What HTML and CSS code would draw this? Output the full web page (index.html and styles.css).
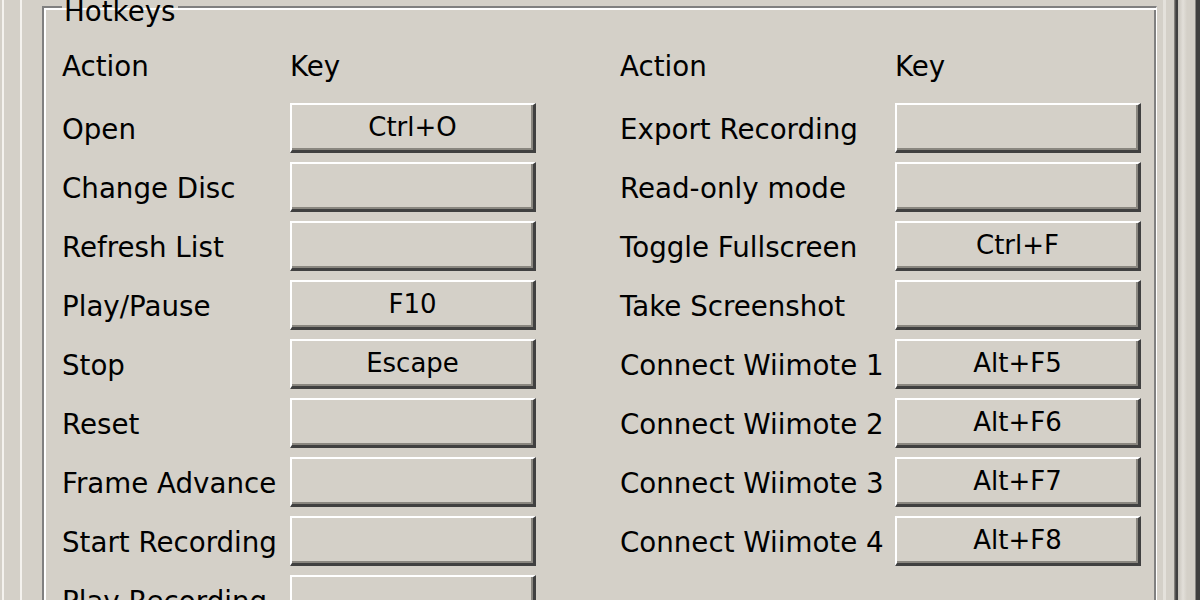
FILE: index.html
```html
<!DOCTYPE html>
<html>
<head>
<meta charset="utf-8">
<link rel="stylesheet" href="styles.css">
</head>
<body>
<div class="win">
  <div class="edge-left"></div>
  <fieldset class="group">
    <legend class="legend"><span class="legend-text">Hotkeys</span></legend>
    <div class="grid">
      <div class="head">Action</div>
      <div class="head key">Key</div>
      <div class="spacer"></div>
      <div class="head">Action</div>
      <div class="head key">Key</div>

      <div class="lbl">Open</div>
      <div class="btn">Ctrl+O</div>
      <div class="spacer"></div>
      <div class="lbl">Export Recording</div>
      <div class="btn"></div>

      <div class="lbl">Change Disc</div>
      <div class="btn"></div>
      <div class="spacer"></div>
      <div class="lbl">Read-only mode</div>
      <div class="btn"></div>

      <div class="lbl">Refresh List</div>
      <div class="btn"></div>
      <div class="spacer"></div>
      <div class="lbl">Toggle Fullscreen</div>
      <div class="btn">Ctrl+F</div>

      <div class="lbl">Play/Pause</div>
      <div class="btn">F10</div>
      <div class="spacer"></div>
      <div class="lbl">Take Screenshot</div>
      <div class="btn"></div>

      <div class="lbl">Stop</div>
      <div class="btn">Escape</div>
      <div class="spacer"></div>
      <div class="lbl">Connect Wiimote 1</div>
      <div class="btn">Alt+F5</div>

      <div class="lbl">Reset</div>
      <div class="btn"></div>
      <div class="spacer"></div>
      <div class="lbl">Connect Wiimote 2</div>
      <div class="btn">Alt+F6</div>

      <div class="lbl">Frame Advance</div>
      <div class="btn"></div>
      <div class="spacer"></div>
      <div class="lbl">Connect Wiimote 3</div>
      <div class="btn">Alt+F7</div>

      <div class="lbl">Start Recording</div>
      <div class="btn"></div>
      <div class="spacer"></div>
      <div class="lbl">Connect Wiimote 4</div>
      <div class="btn">Alt+F8</div>

      <div class="lbl">Play Recording</div>
      <div class="btn"></div>
      <div class="spacer"></div>
      <div class="lbl"></div>
      <div class="empty"></div>
    </div>
  </fieldset>
  <div class="edge-right"></div>
</div>
</body>
</html>
```
FILE: styles.css
```css
html, body {
  margin: 0;
  padding: 0;
  background: #d4d0c8;
}
body {
  width: 1200px;
  height: 600px;
  overflow: hidden;
  font-family: "DejaVu Sans", Verdana, sans-serif;
  font-size: 27.7px;
  color: #000;
}
.win {
  display: flex;
  height: 700px;
  align-items: flex-start;
}
.edge-left {
  width: 42px;
  height: 700px;
  flex: none;
  background: linear-gradient(to right,
    #d4d0c8 0, #d4d0c8 2px, #f4f2ee 2px, #f4f2ee 4px,
    #d4d0c8 4px, #d4d0c8 20px, #f4f2ee 20px, #f4f2ee 22px,
    #d4d0c8 22px);
}
.edge-right {
  width: 43px;
  height: 700px;
  flex: none;
  background: linear-gradient(to right,
    #d4d0c8 0, #d4d0c8 6px, #e4e1db 6px, #e4e1db 9px,
    #d4d0c8 9px, #d4d0c8 17px, #9a968f 17px, #404040 19px, #404040 21px,
    #c8c4bc 21px, #e2dfd9 26px, #d4d0c8 30px, #d4d0c8 38px,
    #404040 39px, #404040 43px);
}
.group {
  flex: none;
  width: 1115px;
  height: 700px;
  box-sizing: border-box;
  margin: 0;
  padding: 0 0 0 18px;
  border-style: solid;
  border-width: 2px 1px 0 2px;
  border-color: #808080 #ffffff #808080 #808080;
  box-shadow: inset 2px 2px 0 #ffffff, inset -2px 0 0 #808080;
  min-width: 0;
}
.legend {
  margin-left: 0;
  padding: 0 2px;
  height: 14px;
  line-height: 14px;
}
.legend-text {
  display: inline-block;
  padding-top: 5px;
}
.grid {
  display: grid;
  grid-template-columns: 228px 246px 84px 275px 246px;
  grid-template-rows: 56px;
  grid-auto-rows: 50px;
  row-gap: 9px;
  align-items: center;
  margin-top: 24px;
}
.head {
  line-height: 30px;
  padding-top: 2px;
}
.lbl {
  line-height: 30px;
  white-space: nowrap;
  padding-top: 4px;
}
.btn {
  height: 50px;
  box-sizing: border-box;
  border-style: solid;
  border-width: 2px 3px 3px 2px;
  border-color: #ffffff #404040 #404040 #ffffff;
  box-shadow: inset -2px -2px 0 #8a8780;
  background: #d4d0c8;
  text-align: center;
  font-size: 26px;
  line-height: 44px;
  white-space: nowrap;
}
```
